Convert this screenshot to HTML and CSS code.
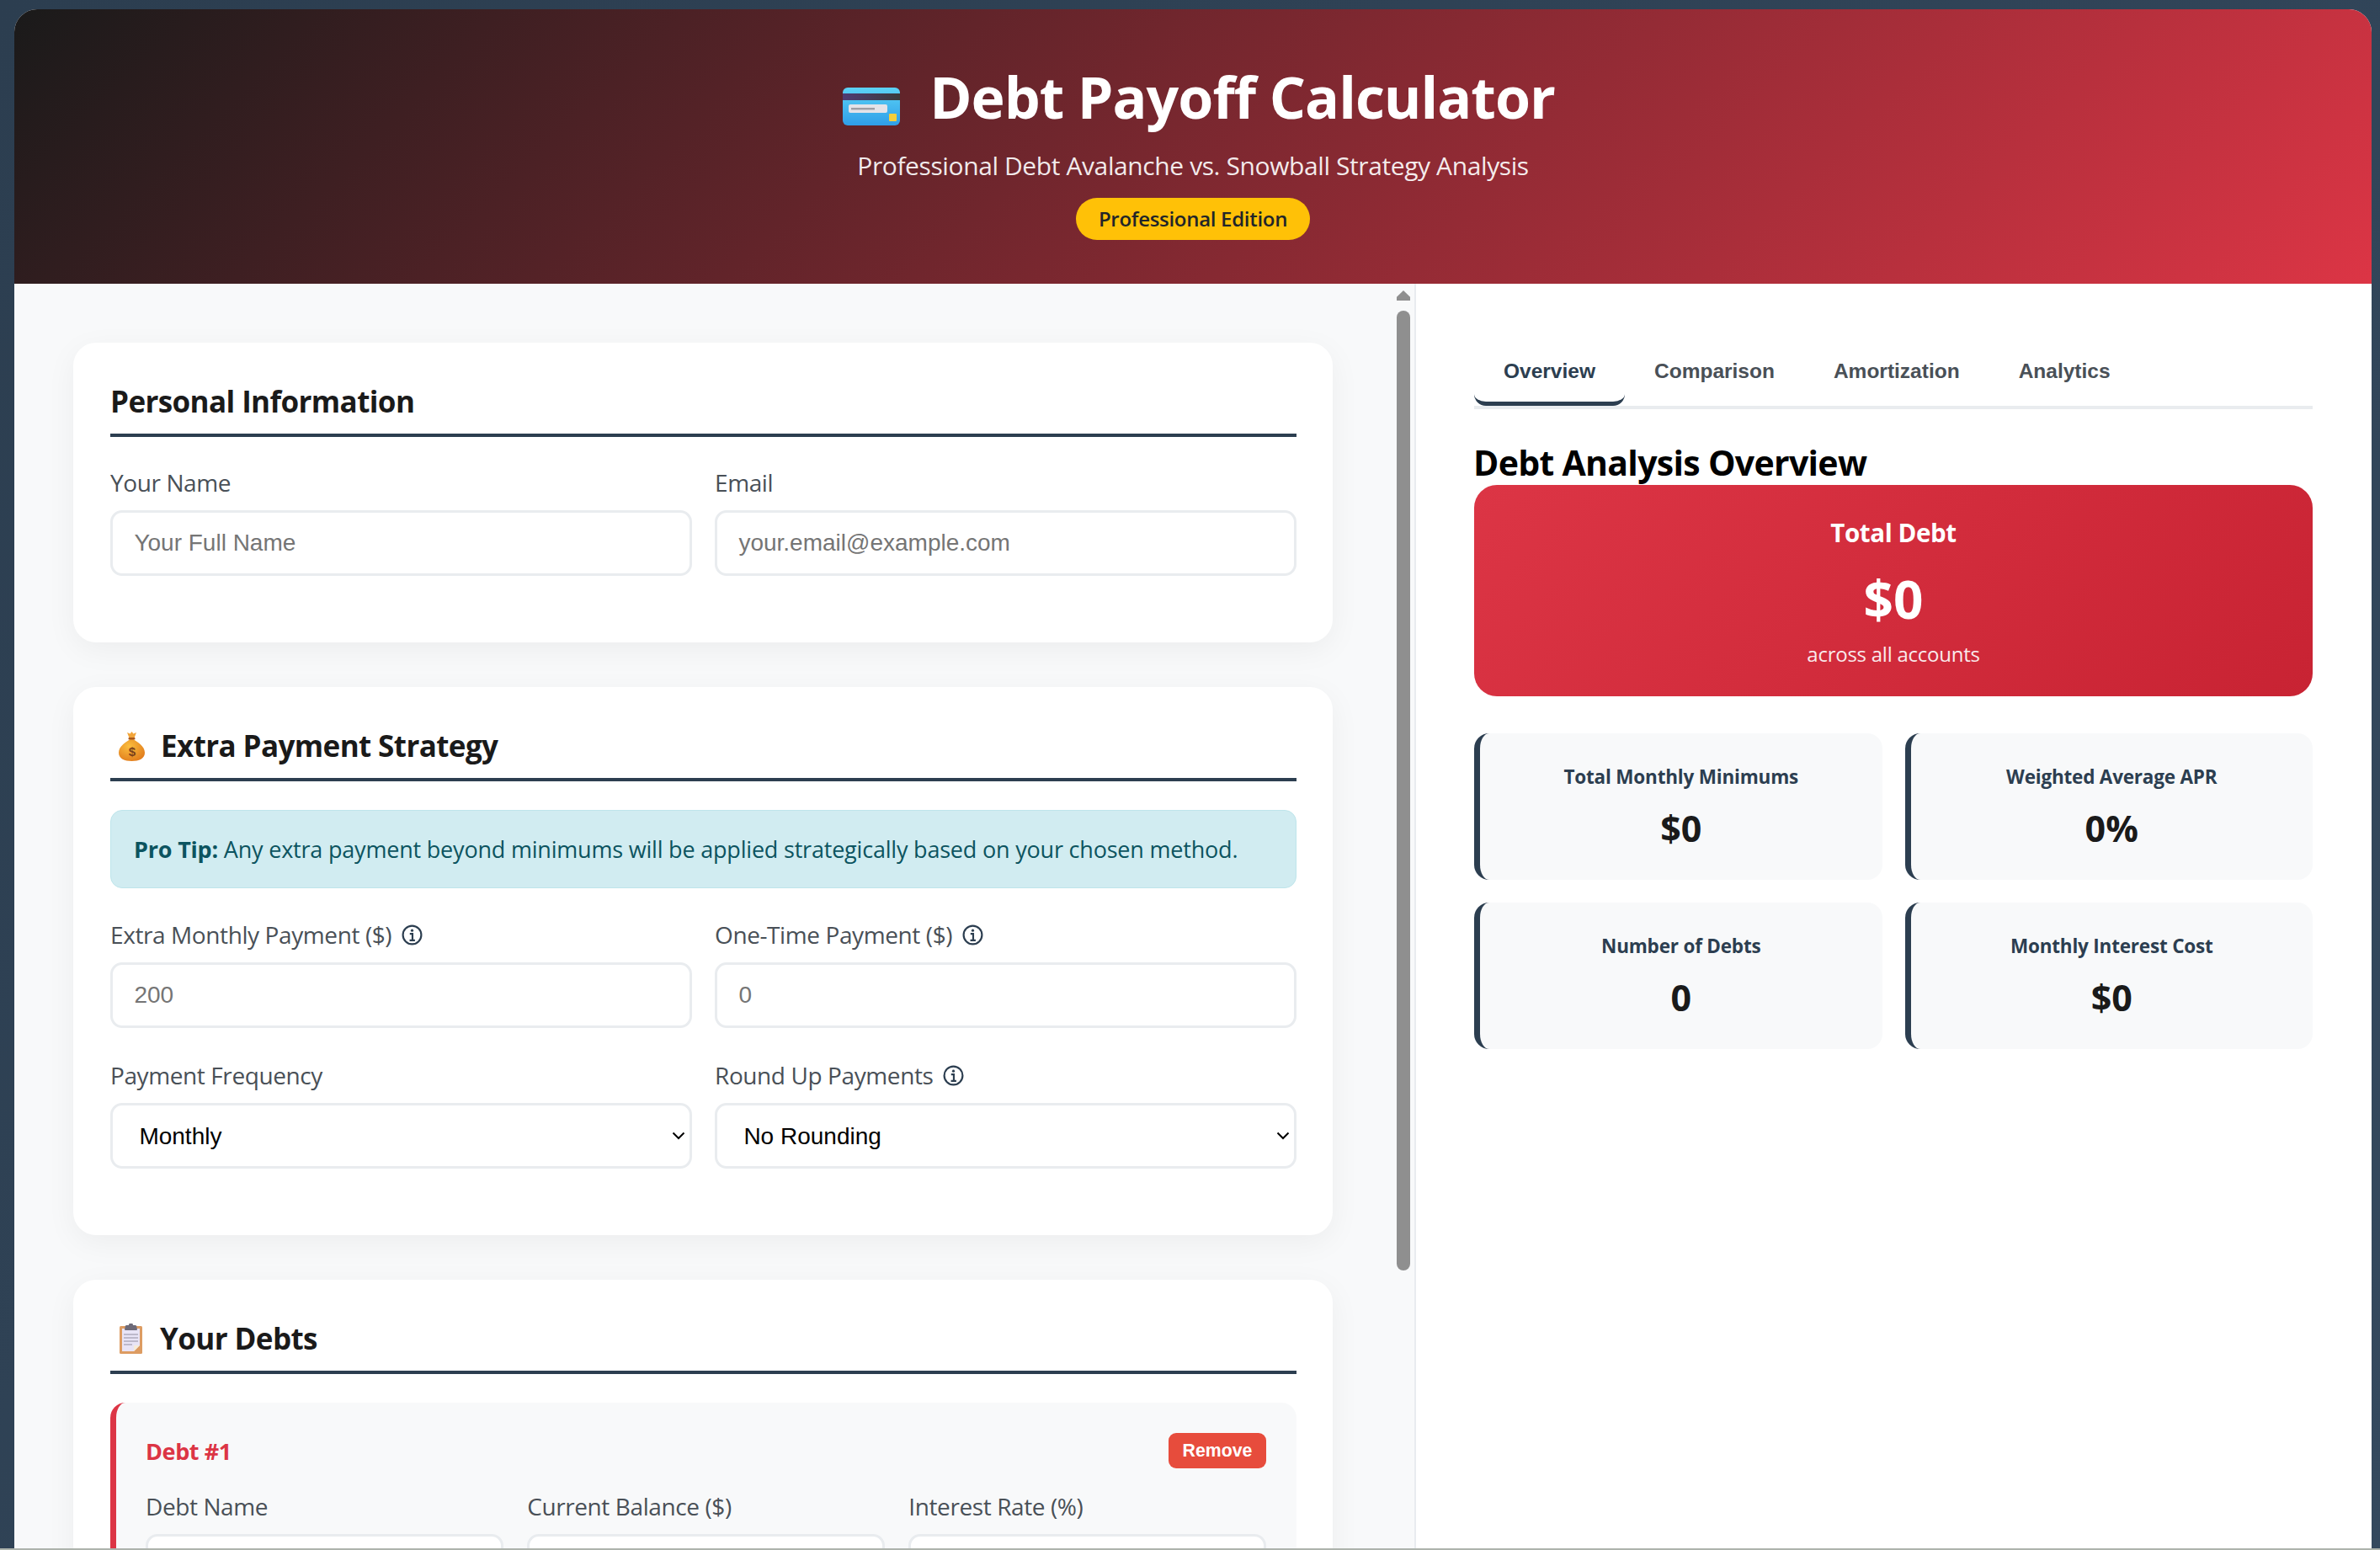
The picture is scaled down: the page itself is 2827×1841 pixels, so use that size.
FILE: index.html
```html
<!DOCTYPE html>
<html lang="en">
<head>
<meta charset="utf-8">
<title>Debt Payoff Calculator</title>
<link rel="stylesheet" href="styles.css">
</head>
<body>
<div class="app">
  <header class="hero">
    <h1 class="hero-title">
      <svg class="emoji-card" viewBox="0 0 68 45" aria-hidden="true">
        <defs>
          <linearGradient id="cardBg" x1="0" y1="0" x2="0" y2="1"><stop offset="0" stop-color="#5cd3f6"/><stop offset="1" stop-color="#2f9ee8"/></linearGradient>
          <linearGradient id="cardStripe" x1="0" y1="0" x2="1" y2="0"><stop offset="0" stop-color="#4f3c74"/><stop offset="1" stop-color="#3b3b3b"/></linearGradient>
        </defs>
        <rect width="68" height="45" rx="6" fill="url(#cardBg)"/>
        <rect y="7" width="68" height="8" fill="url(#cardStripe)"/>
        <rect x="7" y="20" width="46" height="10" rx="2" fill="#e4e3e8"/>
        <rect x="10" y="24" width="28" height="2.4" fill="#a09fa5"/>
        <rect x="55" y="31" width="9" height="9" rx="1" fill="#f4ce3c"/>
      </svg>
      <span>Debt Payoff Calculator</span>
    </h1>
    <p class="hero-sub">Professional Debt Avalanche vs. Snowball Strategy Analysis</p>
    <span class="hero-badge">Professional Edition</span>
  </header>

  <main class="workspace">
    <section class="inputs-pane">
      <div class="inputs-scroll">
        <div class="card">
          <h2 class="card-title">Personal Information</h2>
          <div class="form-row">
            <div class="field">
              <label class="field-label">Your Name</label>
              <input class="control" type="text" placeholder="Your Full Name">
            </div>
            <div class="field">
              <label class="field-label">Email</label>
              <input class="control" type="text" placeholder="your.email@example.com">
            </div>
          </div>
        </div>

        <div class="card">
          <h2 class="card-title">
            <svg class="emoji-bag" viewBox="0 0 31 35" aria-hidden="true">
              <defs>
                <radialGradient id="bagBg" cx="0.4" cy="0.35" r="0.8"><stop offset="0" stop-color="#fbbe3e"/><stop offset="1" stop-color="#de7418"/></radialGradient>
              </defs>
              <path d="M15.5 8C9 12 0 17 0 25c0 7 7 10 15.500 10S31 32 31 25c0-8-9-13-15.500-17z" fill="url(#bagBg)"/>
              <path d="M10 1l3.500 1.500L15.500 0l2 2.500L21 1l-2.500 6.500q-3 1-6 0z" fill="#f2a53a"/>
              <rect x="11.500" y="7" width="8" height="2.500" rx="1" fill="#a9571c"/>
              <text class="emoji-bag-sign" x="15.500" y="29" text-anchor="middle">$</text>
            </svg>
            <span>Extra Payment Strategy</span>
          </h2>
          <div class="tip"><strong class="tip-lead">Pro Tip:</strong> Any extra payment beyond minimums will be applied strategically based on your chosen method.</div>
          <div class="form-row form-row-stack">
            <div class="field">
              <label class="field-label">Extra Monthly Payment ($)
                <svg class="info" viewBox="0 0 22 22" aria-hidden="true"><circle cx="11" cy="11" r="9.600"/><path d="M8.600 9.800H11.400V16.400M8.400 16.600H14"/><circle class="info-dot" cx="11" cy="6.300" r="1.400"/></svg>
              </label>
              <input class="control" type="text" placeholder="200">
            </div>
            <div class="field">
              <label class="field-label">One-Time Payment ($)
                <svg class="info" viewBox="0 0 22 22" aria-hidden="true"><circle cx="11" cy="11" r="9.600"/><path d="M8.600 9.800H11.400V16.400M8.400 16.600H14"/><circle class="info-dot" cx="11" cy="6.300" r="1.400"/></svg>
              </label>
              <input class="control" type="text" placeholder="0">
            </div>
            <div class="field">
              <label class="field-label">Payment Frequency</label>
              <select class="control control-select"><option>Monthly</option></select>
            </div>
            <div class="field">
              <label class="field-label">Round Up Payments
                <svg class="info" viewBox="0 0 22 22" aria-hidden="true"><circle cx="11" cy="11" r="9.600"/><path d="M8.600 9.800H11.400V16.400M8.400 16.600H14"/><circle class="info-dot" cx="11" cy="6.300" r="1.400"/></svg>
              </label>
              <select class="control control-select"><option>No Rounding</option></select>
            </div>
          </div>
        </div>

        <div class="card">
          <h2 class="card-title">
            <svg class="emoji-clip" viewBox="0 0 27 36" aria-hidden="true">
              <rect y="3" width="27" height="33" rx="1.500" fill="#dd9c62"/>
              <path d="M3 6h21v20l-7 7H3z" fill="#e8e4f6"/>
              <path d="M24 26l-7 7v-7z" fill="#f7ecd8"/>
              <path d="M7 2.500a2 2 0 0 1 2-.5h2a2.500 2.500 0 0 1 5 0h2a2 2 0 0 1 2 .5l1 4.500a1 1 0 0 1-1 1H7a1 1 0 0 1-1-1z" fill="#6d6a78"/>
              <path d="M5 13h17M5 17h17M5 21h17M5 25h10" stroke="#918e9f" stroke-width="1.200"/>
            </svg>
            <span>Your Debts</span>
          </h2>
          <div class="debt">
            <div class="debt-head">
              <h3 class="debt-title">Debt #1</h3>
              <button class="remove" type="button">Remove</button>
            </div>
            <div class="debt-fields">
              <div class="field">
                <label class="field-label">Debt Name</label>
                <input class="control" type="text">
              </div>
              <div class="field">
                <label class="field-label">Current Balance ($)</label>
                <input class="control" type="text">
              </div>
              <div class="field">
                <label class="field-label">Interest Rate (%)</label>
                <input class="control" type="text">
              </div>
            </div>
          </div>
        </div>
      </div>
      <div class="scrollbar" aria-hidden="true">
        <div class="scroll-arrow"></div>
        <div class="scroll-thumb"></div>
      </div>
    </section>

    <section class="results-pane">
      <nav class="tabs">
        <button class="tab tab-active" type="button">Overview</button>
        <button class="tab" type="button">Comparison</button>
        <button class="tab" type="button">Amortization</button>
        <button class="tab" type="button">Analytics</button>
      </nav>
      <h2 class="results-title">Debt Analysis Overview</h2>
      <div class="total">
        <div class="total-label">Total Debt</div>
        <div class="total-value">$0</div>
        <div class="total-note">across all accounts</div>
      </div>
      <div class="stats">
        <div class="stat"><div class="stat-label">Total Monthly Minimums</div><div class="stat-value">$0</div></div>
        <div class="stat"><div class="stat-label">Weighted Average APR</div><div class="stat-value">0%</div></div>
        <div class="stat"><div class="stat-label">Number of Debts</div><div class="stat-value">0</div></div>
        <div class="stat"><div class="stat-label">Monthly Interest Cost</div><div class="stat-value">$0</div></div>
      </div>
    </section>
  </main>
</div>
<div class="bottom-edge"></div>
</body>
</html>
```
FILE: styles.css
```css
* { box-sizing: border-box; }
html, body { margin: 0; height: 100%; overflow: hidden; }
body {
  display: flex;
  flex-direction: column;
  background: linear-gradient(135deg, #2c3e50, #34495e);
  font-family: "Open Sans", "Noto Sans", sans-serif;
  color: #1a1a1a;
}
.app {
  flex: 1;
  min-height: 0;
  margin: 11px 10px 0 17px;
  display: flex;
  flex-direction: column;
  background: #fff;
  border-radius: 27px 27px 0 0;
  overflow: hidden;
}
.bottom-edge { height: 2px; background: #adb3ac; }

.hero {
  height: 326px;
  padding-top: 60px;
  display: flex;
  flex-direction: column;
  align-items: center;
  flex: none;
  color: #fff;
  background: linear-gradient(135deg, #1a1a1a, #dc3545);
}
.hero-title {
  margin: 0;
  padding-left: 14px;
  display: flex;
  align-items: center;
  font-size: 68px;
  line-height: 88px;
  font-weight: 700;
  letter-spacing: -1px;
}
.emoji-card { width: 68px; height: 45px; margin: 22px 35px 0 0; flex: none; }
.hero-sub { margin: 16px 0 0; font-size: 30px; line-height: 44px; letter-spacing: -0.4px; color: rgba(255,255,255,.92); }
.hero-badge {
  margin-top: 16px;
  height: 50px;
  padding: 0 27px;
  border-radius: 25px;
  background: #ffc107;
  color: #212529;
  font-size: 24px;
  line-height: 50px;
  font-weight: 600;
  letter-spacing: -0.3px;
}

.workspace { flex: 1; min-height: 0; display: flex; }
.inputs-pane { width: 1663px; flex: none; display: flex; background: #f8f9fa; }
.inputs-scroll { flex: 1; min-width: 0; overflow: hidden; padding: 70px 72px 0 70px; }
.scrollbar { width: 25px; flex: none; padding: 8px 5px 0 4px; display: flex; flex-direction: column; }
.scroll-arrow { height: 12px; background: #8f8f8f; clip-path: polygon(50% 0, 100% 65%, 100% 100%, 0 100%, 0 65%); }
.scroll-thumb { height: 1140px; margin-top: 12px; background: #8f8f8f; border-radius: 8px; }

.card {
  margin-bottom: 53px;
  padding: 42px 43px 43px 44px;
  background: #fff;
  border-radius: 27px;
  box-shadow: 0 9px 36px rgba(0,0,0,.05);
}
.card-title {
  margin: 0 0 34px;
  padding: 1px 0 11px;
  display: flex;
  align-items: center;
  border-bottom: 4px solid #2c3e50;
  font-size: 35px;
  line-height: 54px;
  font-weight: 700;
  letter-spacing: -0.6px;
}
.emoji-bag { width: 31px; height: 35px; margin: 0 19px 0 10px; flex: none; }
.emoji-bag-sign { font-family: "Liberation Sans", sans-serif; font-size: 15px; font-weight: 700; fill: #7a3f1a; }
.emoji-clip { width: 27px; height: 36px; margin: 0 21px 0 11px; flex: none; }

.form-row { display: grid; grid-template-columns: 1fr 1fr; column-gap: 27px; }
.field { margin-bottom: 36px; min-width: 0; }
.field-label {
  display: flex;
  align-items: center;
  gap: 12px;
  height: 40px;
  margin-bottom: 13px;
  font-size: 28px;
  line-height: 40px;
  font-weight: 500;
  color: #495057;
  letter-spacing: -0.4px;
  white-space: nowrap;
}
.info { width: 25px; height: 25px; flex: none; fill: none; stroke: #2c3e50; stroke-width: 1.900; }
.info-dot { fill: #2c3e50; stroke: none; }
.control {
  display: block;
  width: 100%;
  height: 78px;
  padding: 0 25.400px;
  border: 3.600px solid #e9ecef;
  border-radius: 14px;
  background: #fff;
  font-family: "Liberation Sans", Arial, sans-serif;
  font-size: 28px;
  color: #000;
  outline: none;
}
.control::placeholder { color: #757575; opacity: 1; }
.control-select {
  appearance: none;
  -webkit-appearance: none;
  padding-left: 31.400px;
  background-image: url("data:image/svg+xml,%3Csvg xmlns='http://www.w3.org/2000/svg' width='16' height='10' viewBox='0 0 16 10'%3E%3Cpath d='M1.500 1.500L8 8l6.500-6.500' fill='none' stroke='%23000' stroke-width='2'/%3E%3C/svg%3E");
  background-repeat: no-repeat;
  background-position: right 5px center;
}
.tip {
  height: 93px;
  margin: 1px 0 35px;
  padding: 0 27px;
  display: block;
  line-height: 91px;
  background: #d1ecf1;
  border: 1px solid #bee5eb;
  border-radius: 14px;
  color: #0c5460;
  font-size: 27px;
  letter-spacing: -0.2px;
  white-space: nowrap;
}
.tip-lead { font-weight: 700; }

.debt {
  padding: 36px 36px 0 35px;
  background: #f8f9fa;
  border-left: 7px solid #dc3545;
  border-radius: 18px;
}
.debt-head { display: flex; justify-content: space-between; align-items: center; height: 42px; margin-bottom: 25px; }
.debt-title { margin: 0; font-size: 27px; font-weight: 700; color: #dc3545; letter-spacing: -0.4px; }
.remove {
  width: 116px;
  height: 42px;
  padding: 0;
  border: 0;
  border-radius: 9px;
  background: #e74c3c;
  color: #fff;
  font-family: "Liberation Sans", Arial, sans-serif;
  font-size: 21.300px;
  font-weight: 700;
}
.debt-fields { display: grid; grid-template-columns: repeat(3, 1fr); column-gap: 28.500px; }

.results-pane {
  flex: 1;
  min-width: 0;
  padding: 72px 70px 0 69px;
  border-left: 2px solid #e9ecef;
  background: #fff;
}
.tabs { display: flex; border-bottom: 4px solid #e9ecef; }
.tab {
  height: 73px;
  padding: 0 35px 4px;
  border: 0;
  border-bottom: 5px solid transparent;
  border-radius: 14px;
  background: none;
  font-family: "Liberation Sans", Arial, sans-serif;
  font-size: 24.500px;
  font-weight: 700;
  color: #495057;
}
.tab-active { color: #2c3e50; border-bottom-color: #2c3e50; }
.results-title {
  margin: 36px 0 0 -1px;
  font-size: 41px;
  line-height: 54px;
  font-weight: 700;
  color: #000;
  letter-spacing: -0.7px;
}
.total {
  height: 251px;
  padding-top: 35px;
  margin-bottom: 44px;
  text-align: center;
  color: #fff;
  border-radius: 27px;
  background: linear-gradient(135deg, #dc3545, #c82333);
}
.total-label { font-size: 29.500px; line-height: 44px; font-weight: 700; letter-spacing: -0.4px; }
.total-value { margin-top: 16px; font-size: 62px; line-height: 80px; font-weight: 700; }
.total-note { margin-top: 8px; font-size: 24px; line-height: 36px; opacity: .9; letter-spacing: -0.25px; }
.stats { display: grid; grid-template-columns: 1fr 1fr; gap: 27px; }
.stat {
  height: 174px;
  padding-top: 34px;
  text-align: center;
  background: #f8f9fa;
  border-left: 7px solid #2c3e50;
  border-radius: 18px;
}
.stat-label { font-size: 22.500px; line-height: 36px; font-weight: 700; color: #2c3e50; letter-spacing: -0.2px; }
.stat-value { margin-top: 15px; font-size: 43px; line-height: 56px; font-weight: 700; color: #1a1a1a; }
```
